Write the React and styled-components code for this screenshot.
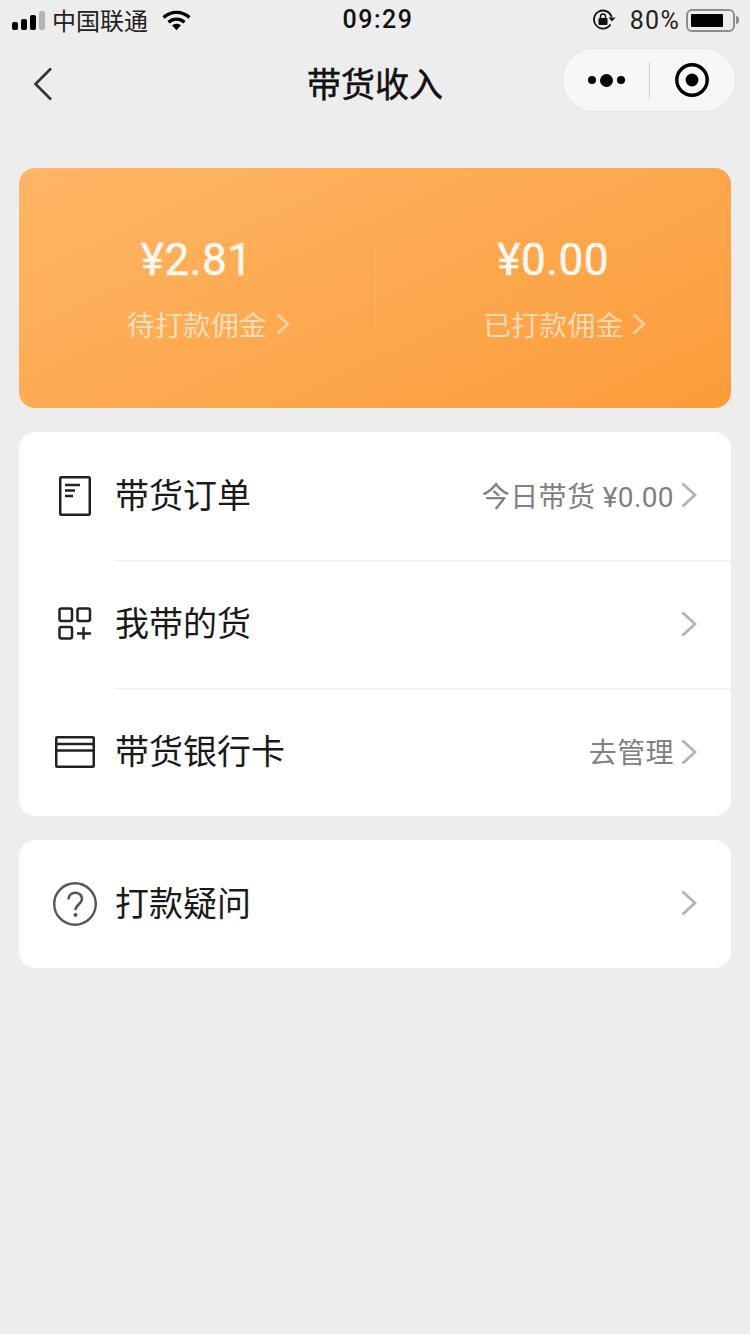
import React from "react";
import styled, { createGlobalStyle } from "styled-components";

const CJK = `"Noto Sans CJK SC", "Liberation Sans", sans-serif`;
const LATIN = `"Roboto", "Noto Sans CJK SC", sans-serif`;

const GlobalStyle = createGlobalStyle`
  html, body {
    margin: 0;
    padding: 0;
    background: #ededed;
  }
  * {
    box-sizing: border-box;
  }
`;

export default function App() {
  return (
    <Page>
      <GlobalStyle />
      <StatusBar>
        <StatusLeft>
          <Signal>
            <SignalBar $h={8} />
            <SignalBar $h={11} />
            <SignalBar $h={15} />
            <SignalBar $h={19} $off />
          </Signal>
          <Carrier>中国联通</Carrier>
          <svg width="29" height="21" viewBox="0 0 29 21">
            <path d="M1.5 7.5C9 .7 20 .7 27.5 7.5" fill="none" stroke="#000" strokeWidth="3.2" />
            <path d="M6.5 12.2c4.6-4 11.4-4 16 0" fill="none" stroke="#000" strokeWidth="3.2" />
            <path d="M10 15.2c2.8-2 6.2-2 9 0l-4.5 5z" fill="#000" />
          </svg>
        </StatusLeft>
        <Clock>09:29</Clock>
        <StatusRight>
          <svg width="24" height="22" viewBox="0 0 24 22">
            <path d="M18.5 15.5A9 9 0 1 1 19.6 8" fill="none" stroke="#111" strokeWidth="1.8" />
            <path d="M16.5 8.5h7l-3.5 4z" fill="#111" />
            <rect x="6.5" y="9" width="9" height="7" rx="1" fill="#111" />
            <path d="M8.5 9V7.5a2.5 2.5 0 0 1 5 0V9" fill="none" stroke="#111" strokeWidth="1.4" />
          </svg>
          <Percent>80%</Percent>
          <Battery>
            <BatteryShell>
              <BatteryLevel />
            </BatteryShell>
            <BatteryCap />
          </Battery>
        </StatusRight>
      </StatusBar>

      <NavBar>
        <BackButton>
          <svg width="20" height="34" viewBox="0 0 20 34">
            <path d="M18 1.5 2.5 17 18 32.5" fill="none" stroke="#333" strokeWidth="2.6" />
          </svg>
        </BackButton>
        <Title>带货收入</Title>
        <Capsule>
          <Dots>
            <Dot $size={8} />
            <Dot $size={13} />
            <Dot $size={8} />
          </Dots>
          <CapsuleDivider />
          <CapsuleSide>
            <svg width="36" height="36" viewBox="0 0 36 36">
              <circle cx="18" cy="18" r="15.2" fill="none" stroke="#000" strokeWidth="3.4" />
              <circle cx="18" cy="18" r="6.4" fill="#000" />
            </svg>
          </CapsuleSide>
        </Capsule>
      </NavBar>

      <Content>
        <Hero>
          <HeroColumn>
            <Amount>¥2.81</Amount>
            <HeroLink>
              待打款佣金
              <HeroArrow>
                <Chevron $color="rgba(255,255,255,0.5)" />
              </HeroArrow>
            </HeroLink>
          </HeroColumn>
          <HeroDivider />
          <HeroColumn>
            <Amount>¥0.00</Amount>
            <HeroLink>
              已打款佣金
              <HeroArrow>
                <Chevron $color="rgba(255,255,255,0.5)" />
              </HeroArrow>
            </HeroLink>
          </HeroColumn>
        </Hero>

        <Card>
          <Row>
            <RowIcon>
              <svg width="44" height="44" viewBox="0 0 44 44">
                <rect x="7.250" y="3.250" width="29.500" height="37.500" rx="1" fill="none" stroke="#222" strokeWidth="2.500" />
                <path d="M12 11h15M12 16.500h10M12 22h8" fill="none" stroke="#222" strokeWidth="2.500" />
              </svg>
            </RowIcon>
            <RowBody>
              <RowLabel>带货订单</RowLabel>
              <RowHint>今日带货 ¥0.00</RowHint>
              <Chevron $color="#b2b2b2" $large />
            </RowBody>
          </Row>
          <Row>
            <RowIcon>
              <svg width="44" height="44" viewBox="0 0 44 44">
                <rect x="6.500" y="6.500" width="12.500" height="12.500" rx="2" fill="none" stroke="#222" strokeWidth="2.500" />
                <rect x="24.500" y="6.500" width="12.500" height="12.500" rx="2" fill="none" stroke="#222" strokeWidth="2.500" />
                <rect x="6.500" y="25" width="12.500" height="11.500" rx="2" fill="none" stroke="#222" strokeWidth="2.500" />
                <path d="M24 31.500h14M30.500 25v12.500" fill="none" stroke="#222" strokeWidth="2.500" />
              </svg>
            </RowIcon>
            <RowBody>
              <RowLabel>我带的货</RowLabel>
              <Chevron $color="#b2b2b2" $large />
            </RowBody>
          </Row>
          <Row>
            <RowIcon>
              <svg width="44" height="44" viewBox="0 0 44 44">
                <rect x="3.250" y="7.250" width="37.500" height="29.500" rx="1" fill="none" stroke="#222" strokeWidth="2.500" />
                <path d="M3 14h38M3 20.500h38" fill="none" stroke="#222" strokeWidth="2.500" />
              </svg>
            </RowIcon>
            <RowBody>
              <RowLabel>带货银行卡</RowLabel>
              <RowHint>去管理</RowHint>
              <Chevron $color="#b2b2b2" $large />
            </RowBody>
          </Row>
        </Card>

        <Card>
          <Row>
            <RowIcon>
              <svg width="44" height="44" viewBox="0 0 44 44">
                <circle cx="22" cy="22" r="20.800" fill="none" stroke="#555" strokeWidth="2.400" />
                <path d="M15.500 17.500c0-9 13.500-9 13.500-.5 0 5-6.500 5.500-6.500 11" fill="none" stroke="#555" strokeWidth="2.600" />
                <circle cx="22.500" cy="33" r="2" fill="#555" />
              </svg>
            </RowIcon>
            <RowBody>
              <RowLabel>打款疑问</RowLabel>
              <Chevron $color="#b2b2b2" $large />
            </RowBody>
          </Row>
        </Card>
      </Content>
    </Page>
  );
}

function Chevron({ $color, $large }) {
  const w = $large ? 16 : 14;
  const h = $large ? 26 : 22;
  return (
    <ChevronIcon width={w} height={h} viewBox={`0 0 ${w} ${h}`} $large={$large}>
      <path
        d={`M1.500 1.500 ${w - 2} ${h / 2} 1.500 ${h - 1.5}`}
        fill="none"
        stroke={$color}
        strokeWidth="2.800"
      />
    </ChevronIcon>
  );
}

const Page = styled.div`
  width: 750px;
  min-height: 1334px;
  background: #ededed;
  font-family: ${CJK};
  color: #111;
`;

const StatusBar = styled.div`
  height: 40px;
  padding: 0 11px 0 12px;
  display: grid;
  grid-template-columns: 1fr auto 1fr;
  align-items: center;
`;

const StatusLeft = styled.div`
  display: flex;
  align-items: center;
`;

const Signal = styled.div`
  display: flex;
  align-items: flex-end;
  gap: 3px;
  height: 20px;
  margin-right: 7px;
`;

const SignalBar = styled.div`
  width: 6px;
  height: ${(p) => p.$h}px;
  border-radius: 2px;
  background: ${(p) => (p.$off ? "#b5b5b5" : "#000")};
`;

const Carrier = styled.span`
  font-size: 24px;
  line-height: 40px;
  color: #222;
  margin-right: 14px;
`;

const Clock = styled.span`
  font-family: ${LATIN};
  font-size: 25px;
  font-weight: 500;
  letter-spacing: 1.5px;
  line-height: 40px;
  margin-left: 5px;
  color: #111;
`;

const StatusRight = styled.div`
  display: flex;
  align-items: center;
  justify-content: flex-end;
`;

const Percent = styled.span`
  font-family: ${LATIN};
  font-size: 25px;
  letter-spacing: 1.3px;
  margin-left: 14px;
  margin-right: 6px;
  color: #222;
`;

const Battery = styled.div`
  display: flex;
  align-items: center;
`;

const BatteryShell = styled.div`
  width: 49px;
  height: 23px;
  padding: 3px;
  border: 2px solid #8e8e8e;
  border-radius: 6px;
`;

const BatteryLevel = styled.div`
  width: 32px;
  height: 100%;
  background: #000;
  border-radius: 1px;
`;

const BatteryCap = styled.div`
  width: 3px;
  height: 8px;
  margin-left: 1px;
  background: #8e8e8e;
  border-radius: 0 3px 3px 0;
`;

const NavBar = styled.div`
  height: 88px;
  padding: 0 14px 8px;
  display: grid;
  grid-template-columns: 1fr auto 1fr;
  align-items: center;
`;

const BackButton = styled.div`
  display: flex;
  align-items: center;
  margin: 7px 0 0 19px;
`;

const Title = styled.div`
  font-size: 34px;
  font-weight: 400;
  -webkit-text-stroke: 0.5px #111;
  line-height: 48px;
  margin-top: 5px;
  color: #111;
`;

const Capsule = styled.div`
  justify-self: end;
  width: 174px;
  height: 64px;
  display: flex;
  align-items: center;
  background: #f7f7f7;
  border: 1px solid #e6e6e6;
  border-radius: 32px;
`;

const Dots = styled.div`
  width: 86px;
  display: flex;
  align-items: center;
  justify-content: center;
  gap: 4px;
`;

const Dot = styled.div`
  width: ${(p) => p.$size}px;
  height: ${(p) => p.$size}px;
  border-radius: 50%;
  background: #000;
`;

const CapsuleDivider = styled.div`
  width: 1px;
  height: 37px;
  background: #cfcfcf;
`;

const CapsuleSide = styled.div`
  flex: 1;
  display: flex;
  align-items: center;
  justify-content: center;
  padding-right: 1px;
`;

const Content = styled.div`
  padding: 40px 19px 0;
  display: flex;
  flex-direction: column;
  gap: 24px;
`;

const Hero = styled.div`
  height: 240px;
  display: flex;
  align-items: center;
  border-radius: 16px;
  background: linear-gradient(155deg, #ffb666 0%, #fb9c3a 100%);
`;

const HeroColumn = styled.div`
  flex: 1;
  display: flex;
  flex-direction: column;
  align-items: center;
`;

const HeroDivider = styled.div`
  width: 1px;
  height: 80px;
  background: rgba(255, 255, 255, 0.18);
`;

const Amount = styled.div`
  font-family: ${LATIN};
  font-size: 44px;
  font-weight: 400;
  -webkit-text-stroke: 0.5px #fff8f0;
  letter-spacing: 0.6px;
  line-height: 52px;
  margin-top: 2px;
  color: #fff8f0;
`;

const HeroLink = styled.div`
  position: relative;
  margin-top: 18px;
  font-size: 28px;
  line-height: 40px;
  color: rgba(255, 255, 255, 0.62);
`;

const HeroArrow = styled.span`
  position: absolute;
  top: 9px;
  left: 100%;
  margin-left: 9px;
`;

const ChevronIcon = styled.svg`
  flex: none;
  display: block;
  margin-top: ${(p) => (p.$large ? "-2px" : "0")};
`;

const Card = styled.div`
  background: #fff;
  border-radius: 16px;
  overflow: hidden;
`;

const Row = styled.div`
  height: 128px;
  display: flex;
  align-items: center;
  padding-left: 34px;

  & + & > div:last-child {
    border-top: 1px solid #ececec;
  }
`;

const RowIcon = styled.div`
  width: 44px;
  height: 44px;
  margin-right: 18px;
  flex: none;
`;

const RowBody = styled.div`
  flex: 1;
  height: 100%;
  display: flex;
  align-items: center;
  padding-right: 34px;
`;

const RowLabel = styled.span`
  flex: 1;
  font-size: 34px;
  line-height: 48px;
  padding-bottom: 5px;
  color: #1a1a1a;
`;

const RowHint = styled.span`
  font-family: ${LATIN};
  font-size: 28px;
  letter-spacing: 0.4px;
  line-height: 40px;
  padding-top: 3px;
  color: #808080;
  margin-right: 7px;
`;
